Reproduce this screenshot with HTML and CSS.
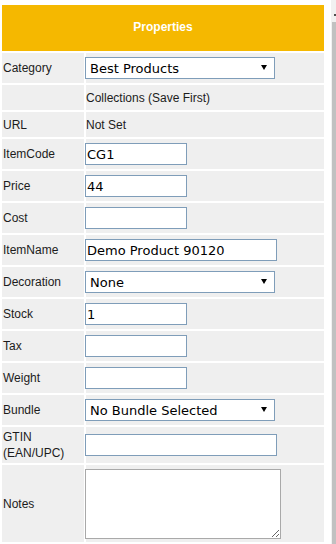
FILE: index.html
```html
<!DOCTYPE html>
<html lang="en">
<head>
    <meta charset="UTF-8">
    <meta name="viewport" content="width=device-width, initial-scale=1.0">
    <title>Properties</title>
    <link rel="stylesheet" href="styles.css">
</head>
<body>
    <div class="page">
        <table class="props">
            <colgroup>
                <col class="col-label">
                <col class="col-value">
            </colgroup>
            <tr class="head-row">
                <th colspan="2">Properties</th>
            </tr>
            <tr class="row">
                <td class="label">Category</td>
                <td class="value">
                    <span class="select-wrap wide">
                        <select><option>Best Products</option></select>
                    </span>
                </td>
            </tr>
            <tr class="row short">
                <td class="label"></td>
                <td class="value text">Collections (Save First)</td>
            </tr>
            <tr class="row short">
                <td class="label">URL</td>
                <td class="value text">Not Set</td>
            </tr>
            <tr class="row">
                <td class="label">ItemCode</td>
                <td class="value"><input class="field" type="text" value="CG1"></td>
            </tr>
            <tr class="row">
                <td class="label">Price</td>
                <td class="value"><input class="field" type="text" value="44"></td>
            </tr>
            <tr class="row">
                <td class="label">Cost</td>
                <td class="value"><input class="field" type="text" value=""></td>
            </tr>
            <tr class="row">
                <td class="label">ItemName</td>
                <td class="value"><input class="field long" type="text" value="Demo Product 90120"></td>
            </tr>
            <tr class="row">
                <td class="label">Decoration</td>
                <td class="value">
                    <span class="select-wrap wide">
                        <select><option>None</option></select>
                    </span>
                </td>
            </tr>
            <tr class="row">
                <td class="label">Stock</td>
                <td class="value"><input class="field" type="text" value="1"></td>
            </tr>
            <tr class="row">
                <td class="label">Tax</td>
                <td class="value"><input class="field" type="text" value=""></td>
            </tr>
            <tr class="row">
                <td class="label">Weight</td>
                <td class="value"><input class="field" type="text" value=""></td>
            </tr>
            <tr class="row">
                <td class="label">Bundle</td>
                <td class="value">
                    <span class="select-wrap wide">
                        <select><option>No Bundle Selected</option></select>
                    </span>
                </td>
            </tr>
            <tr class="row tall">
                <td class="label">GTIN<br>(EAN/UPC)</td>
                <td class="value"><input class="field long" type="text" value=""></td>
            </tr>
            <tr class="row notes">
                <td class="label">Notes</td>
                <td class="value"><textarea class="notes-box"></textarea></td>
            </tr>
        </table>
        <div class="scrollbar">
            <div class="scroll-arrow"></div>
            <div class="scroll-thumb"></div>
        </div>
    </div>
</body>
</html>
```

FILE: styles.css
```css
html {
    overflow: hidden;
}
body {
    margin: 0;
    background-color: #fff;
    font-family: "Liberation Sans", Arial, sans-serif;
    font-size: 12px;
    color: #1c1c1c;
}
.page {
    display: flex;
    align-items: stretch;
    width: 336px;
    height: 544px;
    overflow: hidden;
}
.props {
    border-collapse: separate;
    border-spacing: 2px;
    width: 326px;
    flex: 0 0 326px;
    table-layout: fixed;
    margin-top: 3px;
    align-self: flex-start;
}
.col-label {
    width: 82px;
}
.col-value {
    width: 238px;
}
.head-row {
    height: 46px;
}
.head-row th {
    background-color: #f5b800;
    color: #fff;
    font-weight: bold;
    font-size: 12px;
    text-align: center;
    vertical-align: middle;
    padding: 0 0 3px;
}
.row {
    height: 30px;
}
.row.short {
    height: 25px;
}
.row.tall {
    height: 36px;
}
.row.notes {
    height: 77px;
}
.row td {
    background-color: #efefef;
    vertical-align: middle;
    padding: 0;
}
.row td.label {
    padding-left: 1px;
    line-height: 16px;
}
.field {
    display: block;
    box-sizing: border-box;
    width: 102px;
    height: 22px;
    margin: 0 0 0 -1px;
    padding: 0 1px;
    border: 1px solid #7f9db9;
    background: #fff;
    font-family: "DejaVu Sans", Verdana, sans-serif;
    font-size: 13px;
    color: #000;
    outline: none;
}
.field.long {
    width: 192px;
}
.select-wrap {
    position: relative;
    display: block;
    margin-left: -1px;
}
.select-wrap.wide {
    width: 190px;
}
.select-wrap select {
    display: block;
    box-sizing: border-box;
    width: 100%;
    height: 22px;
    margin: 0;
    padding: 0 0 0 4px;
    border: 1px solid #7f9db9;
    border-radius: 0;
    background: #fff;
    -webkit-appearance: none;
    appearance: none;
    font-family: "DejaVu Sans", Verdana, sans-serif;
    font-size: 13px;
    color: #000;
    outline: none;
}
.select-wrap::after {
    content: "";
    position: absolute;
    right: 8px;
    top: 8px;
    border-left: 3px solid transparent;
    border-right: 3px solid transparent;
    border-top: 5px solid #000;
    pointer-events: none;
}
.notes-box {
    display: block;
    box-sizing: border-box;
    width: 196px;
    height: 70px;
    margin: 0 0 0 -1px;
    border: 1px solid #a9a9a9;
    background: #fff;
    resize: both;
    font-family: "DejaVu Sans", Verdana, sans-serif;
    font-size: 13px;
    outline: none;
}
.scrollbar {
    flex: 0 0 5px;
    margin-left: 5px;
    background-color: #f1f1f1;
    display: flex;
    flex-direction: column;
}
.scroll-arrow {
    height: 22px;
    position: relative;
}
.scroll-arrow::after {
    content: "";
    position: absolute;
    left: 3px;
    top: 14px;
    width: 2px;
    height: 2px;
    background-color: #505050;
}
.scroll-thumb {
    flex: 1;
    margin-left: 1px;
    background-color: #c1c1c1;
}
```
